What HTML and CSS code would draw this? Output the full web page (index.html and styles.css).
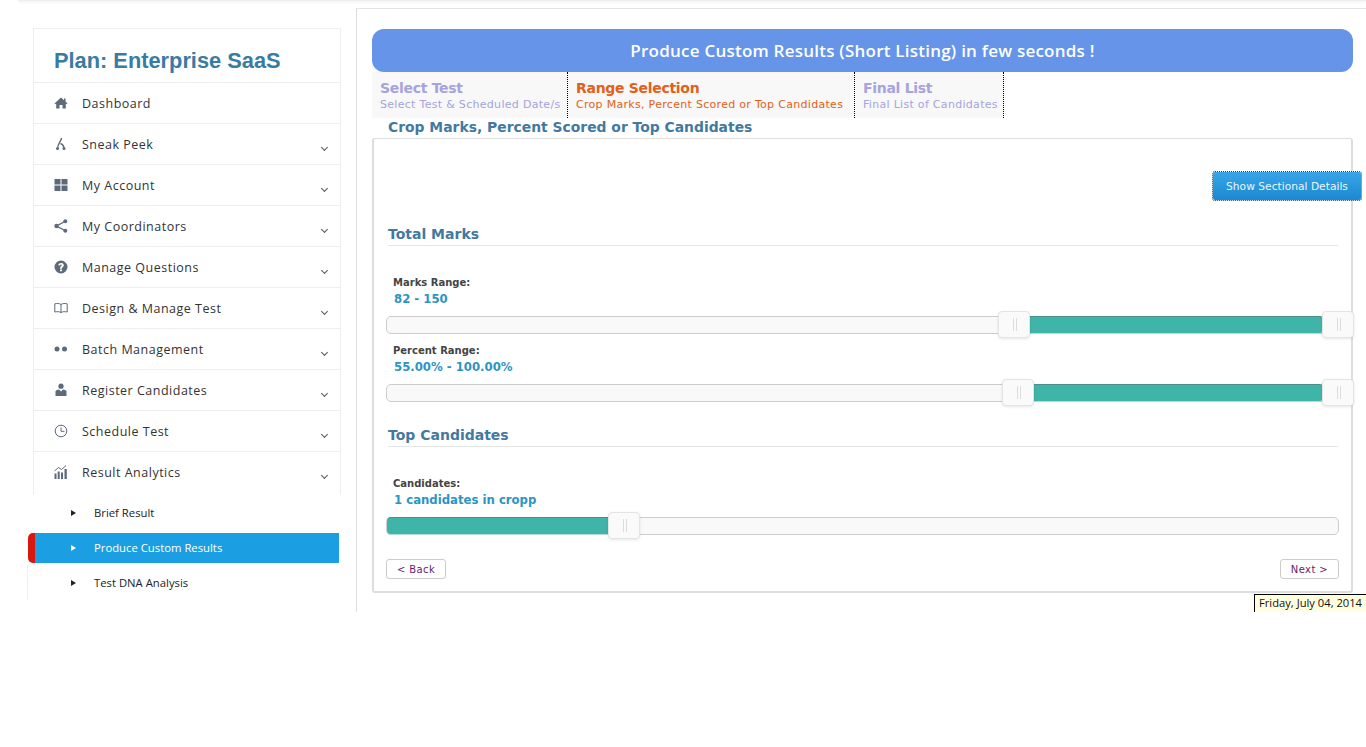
FILE: index.html

```html
<!DOCTYPE html>
<html>
<head>
  <title>Produce Custom Results</title>
  <link rel="stylesheet" href="styles.css">
</head>
<body>
  <div class="topbar"></div>
  <div class="page">
    <div class="side">
      <div class="menu">
        <h2 class="plan">Plan: Enterprise SaaS</h2>
        <div class="item">
          <svg class="ico" viewBox="0 0 14 14"><path d="M7 1.500 0.500 7.400 1.300 8.200 2.200 7.500V12.500H5.500V9H8.500V12.500H11.800V7.500L12.700 8.200 13.500 7.400 11.500 5.600V2.500H10V4.200Z"/></svg>
          <span>Dashboard</span>
        </div>
        <div class="item">
          <svg class="ico" viewBox="0 0 14 14"><path d="M7.500 1C7.500 4 3.500 6 3.500 12" class="line"/><path d="M6.500 6.500C9 7.500 10 9.500 10 12" class="line"/><circle cx="3.500" cy="11.500" r="1.500"/><circle cx="10" cy="11.500" r="1.500"/></svg>
          <span>Sneak Peek</span><i class="chev"></i>
        </div>
        <div class="item">
          <svg class="ico" viewBox="0 0 14 14"><path d="M0.500 1H6.500V6.500H0.500ZM7.500 1H13.500V6.500H7.500ZM0.500 7.500H6.500V13H0.500ZM7.500 7.500H13.500V13H7.500Z"/></svg>
          <span>My Account</span><i class="chev"></i>
        </div>
        <div class="item">
          <svg class="ico" viewBox="0 0 14 14"><path d="M11 2.500 2.500 7 11 11.500" class="line"/><circle cx="11.300" cy="2.300" r="2"/><circle cx="2.500" cy="7" r="2.200"/><circle cx="11.300" cy="11.700" r="2"/></svg>
          <span>My Coordinators</span><i class="chev"></i>
        </div>
        <div class="item">
          <svg class="ico" viewBox="0 0 14 14"><path fill-rule="evenodd" d="M7 0.500A6.500 6.500 0 1 0 7 13.500 6.500 6.500 0 1 0 7 0.500ZM6 9.500H8V11.300H6ZM4.300 5.300C4.500 3.800 5.600 3 7.100 3 8.700 3 9.800 3.900 9.800 5.200 9.800 6.900 8 7 8 8.700H6C6 6.500 7.700 6.400 7.700 5.300 7.700 4.900 7.500 4.600 7 4.600 6.500 4.600 6.300 4.900 6.200 5.500Z"/></svg>
          <span>Manage Questions</span><i class="chev"></i>
        </div>
        <div class="item">
          <svg class="ico" viewBox="0 0 14 14"><path class="thin" d="M7 3.500C5.500 2.300 3 2.300 0.800 2.800V11C3 10.500 5.500 10.500 7 11.500 8.500 10.500 11 10.500 13.200 11V2.800C11 2.300 8.500 2.300 7 3.500V11.500"/></svg>
          <span>Design &amp; Manage Test</span><i class="chev"></i>
        </div>
        <div class="item">
          <svg class="ico" viewBox="0 0 14 14"><circle cx="3" cy="7" r="2.500"/><circle cx="10.500" cy="7" r="2.500"/></svg>
          <span>Batch Management</span><i class="chev"></i>
        </div>
        <div class="item">
          <svg class="ico" viewBox="0 0 14 14"><circle cx="7" cy="3.200" r="2.600"/><path d="M1.500 13V8.500C1.500 7.300 3 6.800 5 6.500L7 8.500 9 6.500C11 6.800 12.500 7.300 12.500 8.500V13Z"/></svg>
          <span>Register Candidates</span><i class="chev"></i>
        </div>
        <div class="item">
          <svg class="ico" viewBox="0 0 14 14"><circle class="thin" cx="7" cy="7" r="5.800"/><path class="thin" d="M7 3.500V7.300H10.500"/></svg>
          <span>Schedule Test</span><i class="chev"></i>
        </div>
        <div class="item item-open">
          <svg class="ico" viewBox="0 0 14 14"><path d="M0.500 8.500H2.500V14H0.500ZM3.700 6.500H5.700V14H3.700ZM7 7.500H9V14H7ZM10.500 4H12.800V14H10.500Z"/><path class="thin" d="M0.500 6 4.500 2.500 7.500 4.500 12 0.500"/></svg>
          <span>Result Analytics</span><i class="chev"></i>
        </div>
      </div>
      <div class="sub">Brief Result</div>
      <div class="sub sub-active">Produce Custom Results</div>
      <div class="sub sub-last">Test DNA Analysis</div>
    </div>

    <div class="main">
      <div class="banner">Produce Custom Results (Short Listing) in few seconds !</div>
      <div class="steps">
        <div class="step">
          <b>Select Test</b>
          <small>Select Test &amp; Scheduled Date/s</small>
        </div>
        <div class="step step-on">
          <b>Range Selection</b>
          <small>Crop Marks, Percent Scored or Top Candidates</small>
        </div>
        <div class="step">
          <b>Final List</b>
          <small>Final List of Candidates</small>
        </div>
      </div>
      <div class="legend">Crop Marks, Percent Scored or Top Candidates</div>
      <div class="box">
        <div class="show-row"><button class="show-btn">Show Sectional Details</button></div>

        <h3 class="sec sec-first">Total Marks</h3>
        <div class="lbl">Marks Range:</div>
        <div class="val">82 - 150</div>
        <div class="track">
          <div class="fill" style="left:66.4%;right:1.6%"></div>
          <div class="handle" style="left:611px"></div>
          <div class="handle" style="left:935px"></div>
        </div>
        <div class="lbl lbl-near">Percent Range:</div>
        <div class="val">55.00% - 100.00%</div>
        <div class="track">
          <div class="fill" style="left:66.8%;right:1.6%"></div>
          <div class="handle" style="left:615px"></div>
          <div class="handle" style="left:935px"></div>
        </div>

        <h3 class="sec sec-top">Top Candidates</h3>
        <div class="lbl">Candidates:</div>
        <div class="val">1 candidates in cropp</div>
        <div class="track">
          <div class="fill" style="left:0;right:76%"></div>
          <div class="handle" style="left:221px"></div>
        </div>

        <div class="nav">
          <button class="nav-btn nav-back">&lt; Back</button>
          <button class="nav-btn nav-next">Next &gt;</button>
        </div>
      </div>
      <div class="date">Friday, July 04, 2014</div>
    </div>
  </div>
</body>
</html>
```

FILE: styles.css

```css
body {
  margin: 0;
  background-color: #fff;
  font-family: "DejaVu Sans", sans-serif;
  overflow: hidden;
}

.topbar {
  height: 1px;
  margin-left: 18px;
  background-color: #eee;
  box-shadow: 0 1px 3px rgba(0, 0, 0, 0.12);
}

.page {
  display: flex;
  align-items: flex-start;
}

/* sidebar */
.side {
  width: 314px;
  margin: 27px 0 0 27px;
  font-family: "Open Sans", sans-serif;
}

.menu {
  width: 306px;
  margin-left: 6px;
  border: 1px solid #eee;
  border-bottom: 0;
}

.plan {
  margin: 0;
  height: 53px;
  padding-left: 20px;
  font: bold 21.800px/64px "Liberation Sans", sans-serif;
  color: #397ca3;
  border-bottom: 1px solid #eee;
}

.item {
  display: flex;
  align-items: center;
  height: 40px;
  padding: 0 13px 0 20px;
  font-size: 12.500px;
  letter-spacing: 0.5px;
  color: #333;
  border-bottom: 1px solid #eee;
}

.item-open {
  padding-bottom: 3px;
  border-bottom: 0;
}

.ico {
  width: 14px;
  height: 14px;
  margin-right: 14px;
  fill: #5c6a7a;
  flex-shrink: 0;
}

.line {
  fill: none;
  stroke: #5c6a7a;
  stroke-width: 1.4;
}

.thin {
  fill: none;
  stroke: #5c6a7a;
  stroke-width: 1;
}

.chev {
  margin-left: auto;
  margin-top: 7px;
  width: 4px;
  height: 4px;
  border-right: 1px solid #555;
  border-bottom: 1px solid #555;
  transform: rotate(45deg);
}

.sub {
  display: flex;
  align-items: center;
  height: 35px;
  margin-left: 1px;
  padding-left: 66px;
  font-size: 11.300px;
  color: #222;
  position: relative;
}

.sub::before {
  content: "";
  position: absolute;
  left: 43px;
  top: 50%;
  margin-top: -3px;
  border-left: 5px solid #222;
  border-top: 3px solid transparent;
  border-bottom: 3px solid transparent;
}

.sub-active {
  height: 28px;
  margin: 3px 0 0 1px;
  color: #fff;
  background-color: #1b9fe2;
  border-left: 7px solid #d8170f;
  border-radius: 5px 0 0 5px;
  padding: 0 0 2px 59px;
  width: 245px;
}

.sub-active::before {
  left: 36px;
  border-left-color: #fff;
}

.sub-last {
  margin-top: 2px;
  box-shadow: -1px 0 0 #fbe8e8;
}

/* main column */
.main {
  position: relative;
  flex: 1;
  margin: 7px 0 0 15px;
  height: 604px;
  padding: 20px 13px 0 15px;
  border-top: 1px solid #e4e4e4;
  border-left: 1px solid #ddd;
  box-sizing: border-box;
}

.banner {
  height: 43px;
  line-height: 43px;
  text-align: center;
  font-family: "Open Sans", sans-serif;
  font-weight: 600;
  font-size: 17px;
  letter-spacing: 0.23px;
  color: #fff;
  background-color: #6594e8;
  border-radius: 12px;
}

.steps {
  display: flex;
  width: 632px;
  height: 46px;
  background-color: #f8f8f8;
}

.step {
  padding: 8px 8px 0;
  border-right: 1px dotted #000;
  color: #a6a3de;
}

.step:nth-child(1) { width: 179px; }
.step:nth-child(2) { width: 271px; }
.step:nth-child(3) { width: 132px; }

.step b {
  display: block;
  font-size: 14px;
  line-height: 17px;
  letter-spacing: -0.3px;
}

.step small {
  display: block;
  margin-top: 1px;
  font-size: 11px;
  letter-spacing: 0.3px;
  line-height: 14px;
  white-space: nowrap;
}

.step-on {
  color: #e2601b;
}

.legend {
  height: 20px;
  padding-left: 16px;
  font-size: 13.900px;
  font-weight: bold;
  line-height: 18px;
  color: #43799f;
}

.box {
  height: 455px;
  box-sizing: border-box;
  padding: 0 13px 0 14px;
  border: 2px solid #ddd;
  border-top-width: 1px;
  border-radius: 3px;
}

.show-row {
  display: flex;
  justify-content: flex-end;
  height: 30px;
  margin: 32px -24px 0 0;
}

.show-btn {
  width: 150px;
  height: 30px;
  font: 10.700px "DejaVu Sans", sans-serif;
  color: #e8f6ff;
  background: linear-gradient(#37a6e8, #1b88d0);
  background-clip: padding-box;
  border: 1px dotted #0b4a78;
  border-radius: 3px;
}

.sec {
  margin: 0;
  height: 24px;
  padding-top: 2px;
  font-size: 14px;
  line-height: 20px;
  color: #43799f;
  border-bottom: 1px solid #e6e6e6;
  box-sizing: border-box;
}

.sec-first {
  margin-top: 21px;
}

.sec-top {
  margin-top: 21px;
}

.lbl {
  margin: 29px 0 0 5px;
  height: 16px;
  font-size: 10px;
  font-weight: bold;
  line-height: 16px;
  color: #444;
}

.lbl-near {
  margin-top: 9px;
}

.val {
  margin-left: 6px;
  height: 17px;
  font-size: 11.700px;
  font-weight: bold;
  line-height: 17px;
  color: #2c94c4;
}

.track {
  position: relative;
  height: 18px;
  margin: 8px -1px 0 -2px;
  box-sizing: border-box;
  background-color: #f9f9f9;
  border: 1px solid #ccc;
  border-radius: 5px;
}

.fill {
  position: absolute;
  top: -1px;
  bottom: -1px;
  background-color: #3fb5aa;
  border-top: 1px solid #4c908a;
  border-bottom: 1px solid #b5dcd8;
  border-radius: 4px;
}

.handle {
  position: absolute;
  top: -6px;
  width: 32px;
  height: 27px;
  background-color: #fafafa;
  border: 1px solid #e4e4e4;
  border-radius: 4px;
  box-sizing: border-box;
  box-shadow: 0 1px 3px rgba(0, 0, 0, 0.1);
}

.handle::after {
  content: "";
  position: absolute;
  left: 14px;
  top: 6px;
  width: 2px;
  height: 13px;
  border-left: 1px solid #ddd;
  border-right: 1px solid #ddd;
}

.nav {
  display: flex;
  justify-content: space-between;
  margin: 24px -1px 0 -2px;
}

.nav-btn {
  height: 20px;
  padding: 0;
  font: 10px "DejaVu Sans", sans-serif;
  letter-spacing: 0.4px;
  color: #6c1a6c;
  background-color: #fff;
  border: 1px solid #ccc;
  border-radius: 3px;
}

.nav-back { width: 60px; }
.nav-next { width: 59px; }

.date {
  position: absolute;
  right: 0;
  top: 585px;
  width: 107px;
  height: 19px;
  padding-left: 4px;
  font-family: "Open Sans", sans-serif;
  font-size: 11.200px;
  line-height: 16px;
  color: #111;
  background-color: #ffffe0;
  border-top: 1px solid #000;
  border-left: 1px solid #000;
  white-space: nowrap;
  overflow: hidden;
}
```
